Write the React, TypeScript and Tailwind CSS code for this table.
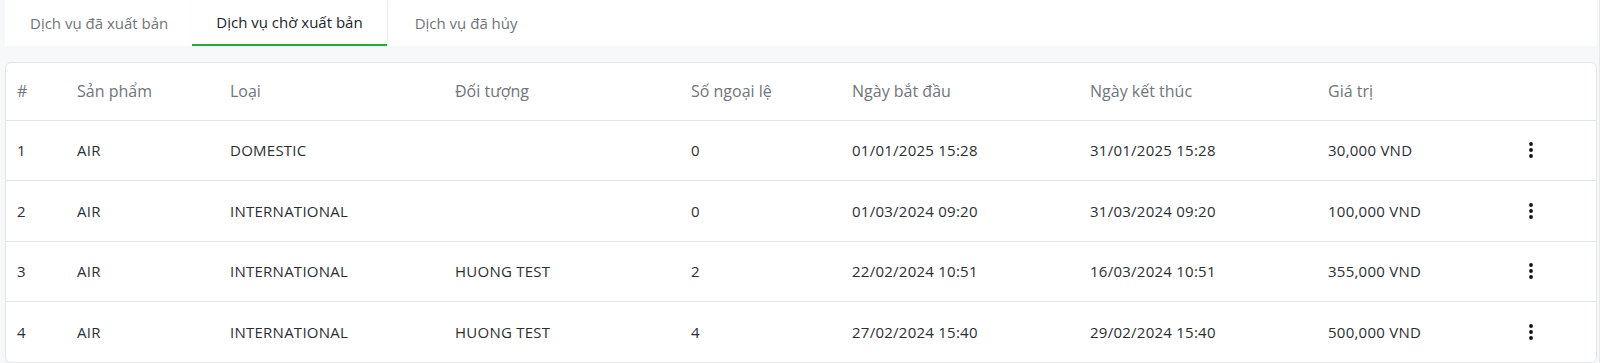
import React from 'react';

interface ServiceRow {
  product: string;
  type: string;
  target: string;
  exceptions: number;
  start: string;
  end: string;
  value: string;
}

const rows: ServiceRow[] = [
  { product: 'AIR', type: 'DOMESTIC', target: '', exceptions: 0, start: '01/01/2025 15:28', end: '31/01/2025 15:28', value: '30,000 VND' },
  { product: 'AIR', type: 'INTERNATIONAL', target: '', exceptions: 0, start: '01/03/2024 09:20', end: '31/03/2024 09:20', value: '100,000 VND' },
  { product: 'AIR', type: 'INTERNATIONAL', target: 'HUONG TEST', exceptions: 2, start: '22/02/2024 10:51', end: '16/03/2024 10:51', value: '355,000 VND' },
  { product: 'AIR', type: 'INTERNATIONAL', target: 'HUONG TEST', exceptions: 4, start: '27/02/2024 15:40', end: '29/02/2024 15:40', value: '500,000 VND' },
];

const tabs = ['Dịch vụ đã xuất bản', 'Dịch vụ chờ xuất bản', 'Dịch vụ đã hủy'];

const DotsIcon = () => (
  <svg width="4" height="16" viewBox="0 0 4 16" fill="#111">
    <circle cx="2" cy="2" r="1.9" />
    <circle cx="2" cy="8" r="1.9" />
    <circle cx="2" cy="14" r="1.9" />
  </svg>
);

const App: React.FC = () => {
  return (
    <div
      className="min-h-[363px] bg-[#f7f8fa] pl-[5px] pr-[2px] border-r border-[#e6e8eb]"
      style={{ fontFamily: '"Open Sans", "Noto Sans", sans-serif' }}
    >
      <div className="flex h-[46px] bg-white pl-px text-[15px]">
        <div className="flex items-center px-6 text-[#70757a]">{tabs[0]}</div>
        <div className="flex items-center px-6 text-[#212529] border-b-2 border-[#28a745] shadow-[1px_0_2px_rgba(0,0,0,0.08)]">
          {tabs[1]}
        </div>
        <div className="flex items-center pl-[28px] pr-6 text-[#70757a]">{tabs[2]}</div>
      </div>

      <div className="mt-[16px] rounded-md border border-[#e3e5e8] bg-white">
        <table className="w-full table-fixed border-collapse text-left">
          <colgroup>
            <col className="w-[71px]" />
            <col className="w-[153px]" />
            <col className="w-[225px]" />
            <col className="w-[236px]" />
            <col className="w-[161px]" />
            <col className="w-[238px]" />
            <col className="w-[238px]" />
            <col className="w-[198px]" />
            <col />
          </colgroup>
          <thead>
            <tr className="h-[57px] border-b border-[#e3e5e8] text-[16px] text-[#70757a]">
              <th className="pl-[11px] font-normal">#</th>
              <th className="font-normal">Sản phẩm</th>
              <th className="font-normal">Loại</th>
              <th className="font-normal">Đối tượng</th>
              <th className="font-normal">Số ngoại lệ</th>
              <th className="font-normal">Ngày bắt đầu</th>
              <th className="font-normal">Ngày kết thúc</th>
              <th className="font-normal">Giá trị</th>
              <th className="font-normal"></th>
            </tr>
          </thead>
          <tbody className="text-[15px] tracking-[0.25px] text-[#2b2f33]">
            {rows.map((r, i) => (
              <tr key={i} className={i < rows.length - 1 ? 'h-[60.5px] border-b border-[#e3e5e8]' : 'h-[60px]'}>
                <td className="pl-[11px]">{i + 1}</td>
                <td>{r.product}</td>
                <td>{r.type}</td>
                <td>{r.target}</td>
                <td>{r.exceptions}</td>
                <td>{r.start}</td>
                <td>{r.end}</td>
                <td>{r.value}</td>
                <td>
                  <div className="flex pl-[3px]">
                    <DotsIcon />
                  </div>
                </td>
              </tr>
            ))}
          </tbody>
        </table>
      </div>
    </div>
  );
};

export default App;
